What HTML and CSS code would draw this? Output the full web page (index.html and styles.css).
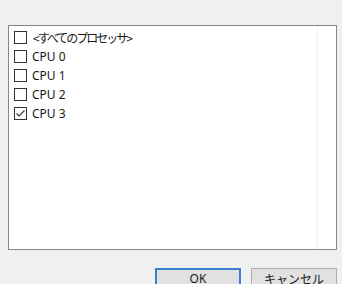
FILE: index.html
```html
<!DOCTYPE html>
<html>
<head>
	<meta charset="utf-8" />
	<title>プロセッサの関係</title>
	<link rel="stylesheet" href="styles.css">
</head>
<body>
	<div class="dialog">
		<div class="listbox">
			<ul class="list">
				<li class="item"><span class="check"></span><span class="label jp">&lt;すべてのプロセッサ&gt;</span></li>
				<li class="item"><span class="check"></span><span class="label">CPU 0</span></li>
				<li class="item"><span class="check"></span><span class="label">CPU 1</span></li>
				<li class="item"><span class="check"></span><span class="label">CPU 2</span></li>
				<li class="item"><span class="check checked"><svg width="11" height="11" viewBox="0 0 11 11"><polyline points="1.5,5.5 4,8 9.5,2.5" fill="none" stroke="#333" stroke-width="1.1"/></svg></span><span class="label">CPU 3</span></li>
			</ul>
		</div>
		<div class="buttons">
			<button class="btn default">OK</button>
			<button class="btn">キャンセル</button>
		</div>
	</div>
</body>
</html>
```
FILE: styles.css
```css
*{
	padding: 0px;
	margin: 0px;
	box-sizing: border-box;
}
body{
	background: #f0f0f0;
	font-family: "Noto Sans", "Noto Sans CJK JP", sans-serif;
	font-size: 12px;
	color: #1a1a1a;
}
.dialog{
	padding: 25px 0 0 8px;
}
.listbox{
	display: flex;
	width: 329px;
	height: 225px;
	border: 1px solid #828790;
	background: #fff;
}
.list{
	list-style: none;
	width: 309px;
	padding: 2px 0 0 5px;
	border-right: 1px solid #eef2f9;
}
.item{
	display: flex;
	align-items: center;
	height: 19px;
}
.check{
	display: flex;
	align-items: center;
	justify-content: center;
	width: 13px;
	height: 13px;
	border: 1px solid #333;
	margin-right: 5px;
	background: #fff;
}
.label{
	line-height: 19px;
	white-space: nowrap;
}
.jp{
	font-family: "Noto Sans CJK JP", sans-serif;
	font-size: 12px;
	letter-spacing: -2px;
	margin-left: 1px;
}
.buttons{
	display: flex;
	justify-content: flex-end;
	gap: 10px;
	margin-top: 18px;
	padding-right: 5px;
}
.btn{
	width: 86px;
	height: 21px;
	border: 1px solid #adadad;
	background: #e1e1e1;
	font-family: "Noto Sans", "Noto Sans CJK JP", sans-serif;
	font-size: 12px;
	color: #1a1a1a;
}
.btn.default{
	border: 2px solid #3b7fd0;
}
```
